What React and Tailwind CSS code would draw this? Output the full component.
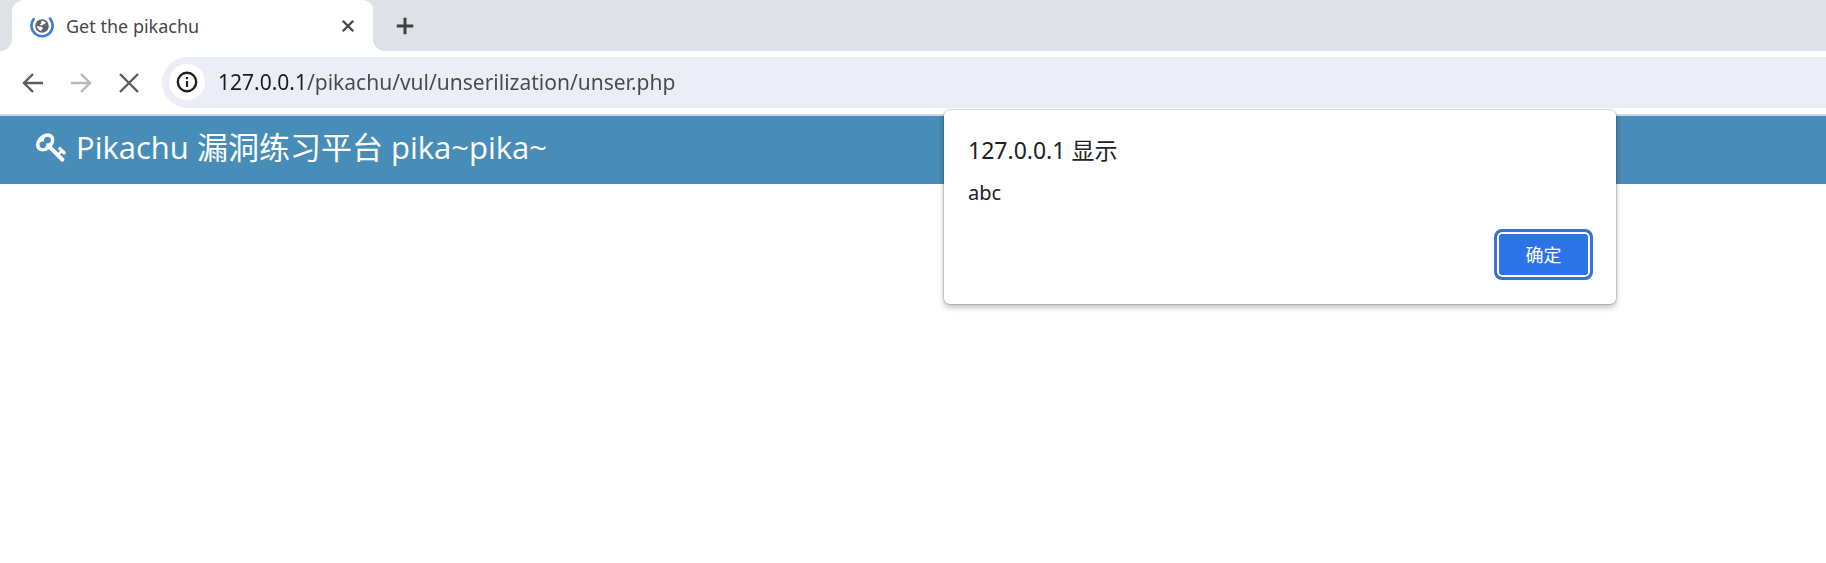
import React from "react";

function LoadingFavicon() {
  return (
    <svg className="size-6 shrink-0" viewBox="0 0 24 24" fill="none" aria-hidden="true">
      <path d="M3.6 5.2A10.6 10.6 0 1 0 20 4.6" stroke="#3b78e0" strokeWidth="2.6" strokeLinecap="round" />
      <circle cx="12" cy="12" r="6.8" fill="#5f6368" />
      <path d="M11.8 6.8Q14.4 6.6 15.8 8.6L14.8 10.2 13.4 10 13 11.2 10.6 11.4 9.8 10.4 11.2 9.6 10.8 8.2Z" fill="#fff" />
      <path d="M6.8 11.8 9.4 12.6 12 13 13 14.4 11.6 15.4 11.4 17Q7.6 16.4 6.8 11.8Z" fill="#fff" />
    </svg>
  );
}

function KeyIcon() {
  return (
    <svg className="size-8 shrink-0" viewBox="0 0 1792 1792" fill="currentColor" aria-hidden="true">
      <path d="M832 512q0-80-56-136t-136-56-136 56-56 136q0 42 19 83-41-19-83-19-80 0-136 56t-56 136 56 136 136 56 136-56 56-136q0-42-19-83 41 19 83 19 80 0 136-56t56-136zm851 704q0 17-49 66t-66 49q-9 0-28.5-16t-36.5-33-38.5-40-24.5-26l-96 96 220 220q28 28 28 68 0 42-39 81t-81 39q-40 0-68-28l-671-671q-176 131-365 131-163 0-265.5-102.5t-102.5-265.5q0-160 95-313t248-248 313-95q163 0 265.5 102.5t102.5 265.5q0 189-131 365l355 355 96-96q-3-3-26-24.5t-40-38.5-33-36.5-16-28.5q0-17 49-66t66-49q13 0 23 10 6 6 46 44.5t82 79.5 86.5 86 73 78 28.5 41z" />
    </svg>
  );
}

function StrokeIcon({ d, className }) {
  return (
    <svg className={className} viewBox="0 0 24 24" fill="none" stroke="currentColor" aria-hidden="true">
      <path d={d} />
    </svg>
  );
}

function TabStrip() {
  return (
    <div className="flex h-[51px] bg-[#dee1e6]">
      <div className="w-3 bg-white">
        <div className="h-full rounded-br-xl bg-[#dee1e6]" />
      </div>
      <div className="-mr-px flex w-[362px] items-center rounded-t-xl bg-white pt-px pr-4 pl-[18px]">
        <LoadingFavicon />
        <span className="ml-3 flex-1 text-[18px] text-[#45474a]">Get the pikachu</span>
        <button type="button" aria-label="Close tab" className="flex size-5 items-center justify-center text-[#45474a]">
          <StrokeIcon d="M3 3 21 21M21 3 3 21" className="size-[14px] [stroke-width:4]" />
        </button>
      </div>
      <div className="flex-1 bg-white">
        <div className="flex h-full items-center rounded-bl-xl bg-[#dee1e6] pl-5">
          <button type="button" aria-label="New tab" className="flex size-6 items-center justify-center text-[#3c4043]">
            <StrokeIcon d="M12 1V23M1 12H23" className="size-[18px] [stroke-width:4]" />
          </button>
        </div>
      </div>
    </div>
  );
}

function Toolbar() {
  return (
    <div className="flex h-[65px] items-center border-b-2 border-[#d5d8e4] bg-white pl-[21px]">
      <div className="flex gap-6">
        <button type="button" aria-label="Back" className="flex size-6 items-center justify-center text-[#5a5c5f]">
          <StrokeIcon d="M22 12H3M12 3 3 12 12 21" className="size-6 [stroke-width:2.4]" />
        </button>
        <button type="button" aria-label="Forward" disabled className="flex size-6 items-center justify-center text-[#b8b9ba]">
          <StrokeIcon d="M2 12H21M12 3 21 12 12 21" className="size-6 [stroke-width:2.4]" />
        </button>
        <button type="button" aria-label="Stop loading" className="flex size-6 items-center justify-center text-[#5a5c5f]">
          <StrokeIcon d="M3 3 21 21M21 3 3 21" className="size-6 [stroke-width:2.4]" />
        </button>
      </div>
      <div className="ml-[21px] flex h-[51px] flex-1 items-center rounded-l-full bg-[#ebedf7] pb-px pl-[7px]">
        <button type="button" aria-label="Site information" className="flex size-9 items-center justify-center rounded-full bg-white text-[#1f1f1f]">
          <svg className="size-6" viewBox="0 0 24 24" fill="none" stroke="currentColor" aria-hidden="true">
            <circle cx="12" cy="12" r="9.2" strokeWidth="2.4" />
            <path d="M12 11V17" strokeWidth="2.2" />
            <path d="M12 7V9.2" strokeWidth="2.2" />
          </svg>
        </button>
        <input
          type="text"
          aria-label="Address"
          defaultValue="127.0.0.1/pikachu/vul/unserilization/unser.php"
          className="ml-[13px] h-9 flex-1 bg-[linear-gradient(to_right,#1b1c1e_87px,#47494d_87px)] bg-clip-text text-[21px] text-transparent outline-none"
        />
      </div>
    </div>
  );
}

function AlertDialog() {
  return (
    <div
      role="alertdialog"
      aria-labelledby="alert-title"
      aria-describedby="alert-message"
      className="absolute top-[110px] left-[944px] flex w-[672px] flex-col rounded-md bg-white pt-[22px] pr-[23px] pb-6 pl-6 text-[#202124] shadow-[0_0_0_1px_rgba(0,0,0,0.12),0_3px_6px_rgba(0,0,0,0.28)]"
    >
      <h2 id="alert-title" className="text-[23px] leading-9">127.0.0.1 显示</h2>
      <p id="alert-message" className="mt-[9px] text-[20px] leading-8">abc</p>
      <button
        type="button"
        className="mt-5 h-[51px] w-[99px] self-end rounded-lg border-3 border-[#3a6fd8] bg-[#2d73e8] pt-[2px] text-[18px] text-white shadow-[inset_0_0_0_2px_white]"
      >
        确定
      </button>
    </div>
  );
}

export default function App() {
  return (
    <div className="relative min-h-screen bg-white font-['Noto_Sans','Noto_Sans_CJK_SC',sans-serif]">
      <TabStrip />
      <Toolbar />
      <header className="flex h-[68px] items-center bg-[#488db8] pb-[6px] pl-9 text-white">
        <a href="#" className="flex items-center gap-2 font-['Open_Sans','Noto_Sans_CJK_SC',sans-serif] text-[31px] leading-10">
          <KeyIcon />
          <span>Pikachu 漏洞练习平台 pika~pika~</span>
        </a>
      </header>
      <AlertDialog />
    </div>
  );
}
